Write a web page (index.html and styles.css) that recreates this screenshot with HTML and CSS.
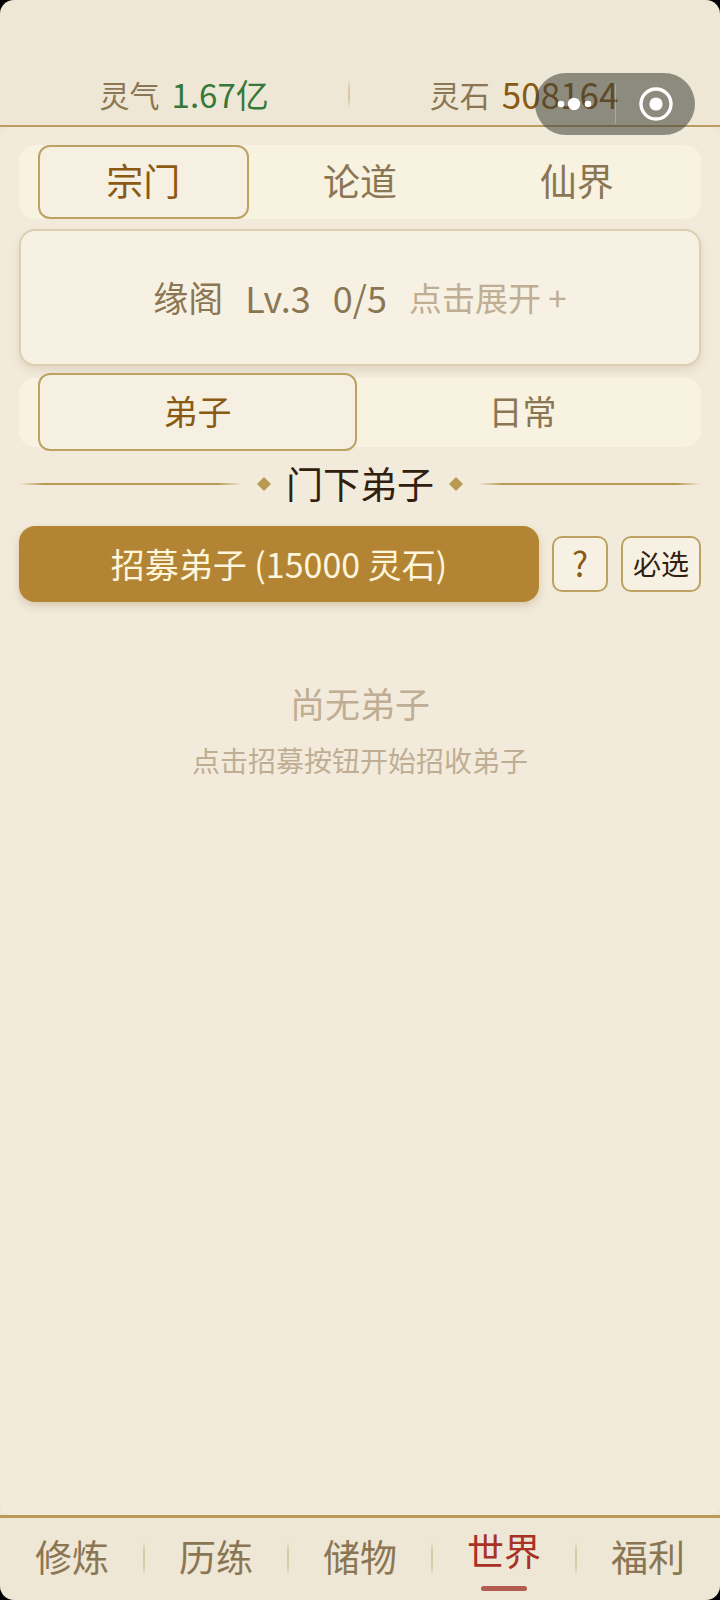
FILE: index.html
```html
<!DOCTYPE html>
<html lang="zh-CN">
<head>
<meta charset="utf-8">
<meta name="viewport" content="width=device-width, initial-scale=1">
<title>宗门</title>
<link rel="stylesheet" href="styles.css">
</head>
<body>
<div class="app">
  <header class="header">
    <div class="stat"><span class="stat-label">灵气</span><span class="stat-value green">1.67亿</span></div>
    <div class="stat-divider"></div>
    <div class="stat"><span class="stat-label">灵石</span><span class="stat-value">508164</span></div>
    <div class="capsule">
      <button class="capsule-btn" aria-label="更多">
        <svg width="36" height="36" viewBox="0 0 36 36" fill="#fff"><circle cx="4" cy="18" r="3.3"/><circle cx="17" cy="18" r="6.2"/><circle cx="31" cy="18" r="3.3"/></svg>
      </button>
      <span class="capsule-divider"></span>
      <button class="capsule-btn" aria-label="关闭">
        <svg width="36" height="36" viewBox="0 0 36 36"><circle cx="19" cy="18" r="15" fill="none" stroke="#fff" stroke-width="3.4"/><circle cx="19" cy="18" r="6.6" fill="#fff"/></svg>
      </button>
    </div>
  </header>

  <main class="main">
    <nav class="tabs">
      <button class="tab active">宗门</button>
      <button class="tab">论道</button>
      <button class="tab">仙界</button>
    </nav>

    <button class="card">
      <span class="card-name">缘阁</span>
      <span>Lv.3</span>
      <span>0/5</span>
      <span class="card-hint">点击展开 +</span>
    </button>

    <nav class="tabs subtabs">
      <button class="tab active">弟子</button>
      <button class="tab">日常</button>
    </nav>

    <div class="heading">
      <svg class="heading-line" viewBox="0 0 222 4" preserveAspectRatio="none"><path d="M0 2 24 1H198L222 2 198 3H24z"/></svg>
      <svg class="diamond" viewBox="0 0 14 14"><path d="M7 0 14 7 7 14 0 7z"/></svg>
      <h2 class="heading-text">门下弟子</h2>
      <svg class="diamond" viewBox="0 0 14 14"><path d="M7 0 14 7 7 14 0 7z"/></svg>
      <svg class="heading-line" viewBox="0 0 222 4" preserveAspectRatio="none"><path d="M0 2 24 1H198L222 2 198 3H24z"/></svg>
    </div>

    <div class="actions">
      <button class="recruit">招募弟子 (15000 灵石)</button>
      <button class="small-btn help">?</button>
      <button class="small-btn pick">必选</button>
    </div>

    <div class="empty">
      <p class="empty-title">尚无弟子</p>
      <p class="empty-text">点击招募按钮开始招收弟子</p>
    </div>
  </main>

  <nav class="footer">
    <a class="nav-item" href="#">修炼</a>
    <a class="nav-item" href="#">历练</a>
    <a class="nav-item" href="#">储物</a>
    <a class="nav-item current" href="#">世界</a>
    <a class="nav-item" href="#">福利</a>
  </nav>
</div>
</body>
</html>
```

FILE: styles.css
```css
* {
  box-sizing: border-box;
}

body {
  margin: 0;
  background: #000;
  color: #8b7654;
  font-family: "Noto Sans CJK SC", sans-serif;
}

button {
  margin: 0;
  padding: 0;
  border: 0;
  background: none;
  color: inherit;
  font: inherit;
}

.app {
  display: flex;
  flex-direction: column;
  min-height: 100vh;
  overflow: hidden;
  border-radius: 14px;
  background: #efe7d5;
}

.header {
  position: relative;
  display: flex;
  align-items: center;
  height: 127px;
  padding: 62px 22px 0 20px;
  border-bottom: 2px solid #bd9c62;
}

.stat {
  display: flex;
  flex: 1 1 auto;
  align-items: center;
  justify-content: center;
  gap: 12px;
  line-height: 40px;
}

.stat-label {
  font-size: 30px;
}

.stat-value {
  color: #8a5a14;
  font-size: 35px;
}

.stat-value.green {
  color: #35783a;
  font-size: 33px;
}

.stat-divider {
  width: 2px;
  height: 28px;
  background: linear-gradient(transparent, #d8c8a8 30%, #d8c8a8 70%, transparent);
}

.capsule {
  position: absolute;
  top: 73px;
  right: 25px;
  display: flex;
  align-items: center;
  width: 160px;
  height: 62px;
  border-radius: 31px;
  background: rgba(61, 62, 55, 0.55);
}

.capsule-btn {
  display: flex;
  flex: 1;
  align-items: center;
  justify-content: center;
}

.capsule-divider {
  width: 1px;
  height: 40px;
  background: rgba(255, 255, 255, 0.25);
}

.main {
  flex: 1;
  padding: 18px 19px;
  border-radius: 12px;
  background: #f2ebdb;
}

.tabs {
  display: flex;
  gap: 6px;
  padding: 0 19px;
  border-radius: 16px;
  background: #f8f2e1;
}

.tab {
  flex: 1;
  height: 74px;
  padding-bottom: 4px;
  border: 2px solid transparent;
  border-radius: 12px;
  font-size: 37px;
  line-height: 40px;
}

.tab.active {
  border-color: #bda262;
  background: #f6f0e2;
  color: #8a5a14;
}

.card {
  display: flex;
  align-items: center;
  justify-content: center;
  gap: 22px;
  width: 100%;
  height: 137px;
  margin: 10px 0 12px;
  padding-bottom: 2px;
  border: 2px solid #dccfb1;
  border-radius: 16px;
  background: #f7f1e3;
  box-shadow: 0 4px 8px rgba(139, 118, 84, 0.18);
  font-size: 36px;
}

.card-name {
  font-size: 35px;
}

.card-hint {
  color: #bfae93;
  font-size: 33px;
}

.subtabs .tab {
  height: 78px;
  margin: -5px 0 -4px;
  padding-bottom: 2px;
  font-size: 34px;
}

.heading {
  display: flex;
  align-items: center;
  gap: 15px;
  margin: 12px 0 17px;
}

.heading-line {
  flex: 1;
  min-width: 0;
  height: 4px;
  fill: #b99a55;
}

.diamond {
  width: 14px;
  height: 14px;
  fill: #b99a55;
}

.heading-text {
  margin: 0;
  padding-bottom: 2px;
  color: #302010;
  font-size: 37px;
  font-weight: 400;
  line-height: 48px;
}

.actions {
  display: flex;
  align-items: center;
  gap: 13px;
}

.recruit {
  flex: 1;
  height: 76px;
  padding-bottom: 2px;
  border-radius: 16px;
  background: #b38433;
  box-shadow: 0 4px 8px rgba(139, 100, 40, 0.25);
  color: #fdf5dc;
  font-size: 34px;
}

.small-btn {
  height: 56px;
  padding-bottom: 2px;
  border: 2px solid #bda262;
  border-radius: 10px;
  background: #f7f1e3;
  line-height: 40px;
}

.help {
  width: 56px;
  color: #8a5a14;
  font-size: 34px;
}

.pick {
  width: 80px;
  color: #302010;
  font-size: 28px;
}

.empty {
  padding-top: 76px;
  color: #bfae93;
  text-align: center;
}

.empty-title {
  margin: 0 0 12px;
  font-size: 35px;
  line-height: 50px;
}

.empty-text {
  margin: 0;
  font-size: 28px;
  line-height: 40px;
}

.footer {
  display: flex;
  height: 85px;
  border-top: 3px solid #b99a55;
}

.nav-item {
  position: relative;
  display: flex;
  flex: 1;
  align-items: center;
  justify-content: center;
  padding-bottom: 6px;
  color: #8b7654;
  font-size: 37px;
  line-height: 40px;
  text-decoration: none;
}

.nav-item + .nav-item::before {
  content: "";
  position: absolute;
  top: 22px;
  left: -1px;
  width: 2px;
  height: 36px;
  background: linear-gradient(transparent, #d8cbab 30%, #d8cbab 70%, transparent);
}

.nav-item.current {
  padding-bottom: 18px;
  color: #a83226;
}

.nav-item.current::after {
  content: "";
  position: absolute;
  bottom: 9px;
  left: calc(50% - 23px);
  width: 46px;
  height: 5px;
  border-radius: 3px;
  background: #b05c50;
}
```
